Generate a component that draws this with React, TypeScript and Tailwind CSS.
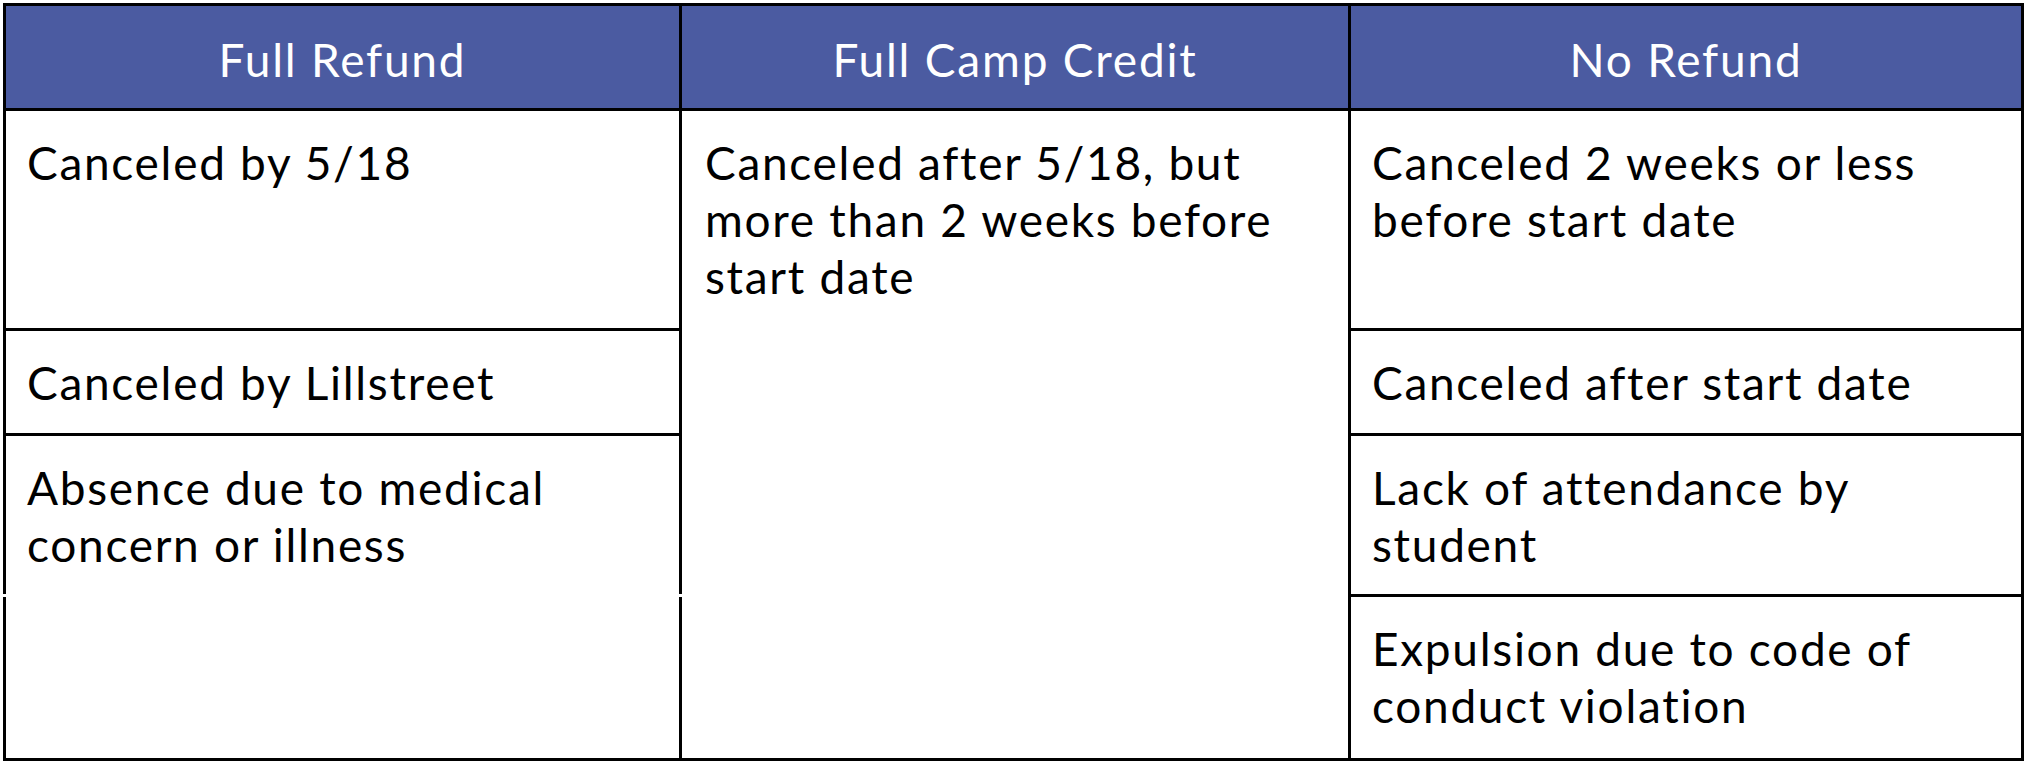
export default function App() {
  const font = { fontFamily: "Lato, 'Noto Sans', sans-serif" };
  const cell = "pl-[21px] pr-[10px] pt-[23px] text-[46px] leading-[57px] text-black font-normal tracking-[1.7px]";
  return (
    <div className="w-[2028px] h-[766px] bg-white pl-[3px] pt-[3px]" style={font}>
      <div className="relative w-[2021px] h-[758px] border-[3px] border-black flex flex-col">
        <div className="h-[105px] flex bg-[#4b5ba1] border-b-[3px] border-black text-white text-[46px] leading-[57px] font-normal tracking-[1.8px]">
          <div className="w-[676px] border-r-[3px] border-black flex items-center justify-center pt-[4px]">Full Refund</div>
          <div className="w-[669px] border-r-[3px] border-black flex items-center justify-center pt-[4px]">Full Camp Credit</div>
          <div className="flex-1 flex items-center justify-center pt-[4px]">No Refund</div>
        </div>
        <div className="flex flex-1">
          <div className="w-[676px] border-r-[3px] border-black flex flex-col">
            <div className={`h-[220px] border-b-[3px] border-black ${cell}`}>Canceled by 5/18</div>
            <div className={`h-[105px] border-b-[3px] border-black ${cell}`}>Canceled by Lillstreet</div>
            <div className={`flex-1 ${cell}`}>Absence due to medical<br />concern or illness</div>
          </div>
          <div className="w-[669px] border-r-[3px] border-black flex flex-col">
            <div className={`flex-1 ${cell} pl-[23px]`}>Canceled after 5/18, but<br />more than 2 weeks before<br />start date</div>
          </div>
          <div className="flex-1 flex flex-col">
            <div className={`h-[220px] border-b-[3px] border-black ${cell}`}>Canceled 2 weeks or less<br />before start date</div>
            <div className={`h-[105px] border-b-[3px] border-black ${cell}`}>Canceled after start date</div>
            <div className={`h-[161px] border-b-[3px] border-black ${cell}`}>Lack of attendance by<br />student</div>
            <div className={`flex-1 ${cell}`}>Expulsion due to code of<br />conduct violation</div>
          </div>
        </div>
        <span className="absolute left-[-3px] top-[588px] w-[3px] h-[3px] bg-white" />
        <span className="absolute left-[673px] top-[588px] w-[3px] h-[3px] bg-white" />
      </div>
    </div>
  );
}
